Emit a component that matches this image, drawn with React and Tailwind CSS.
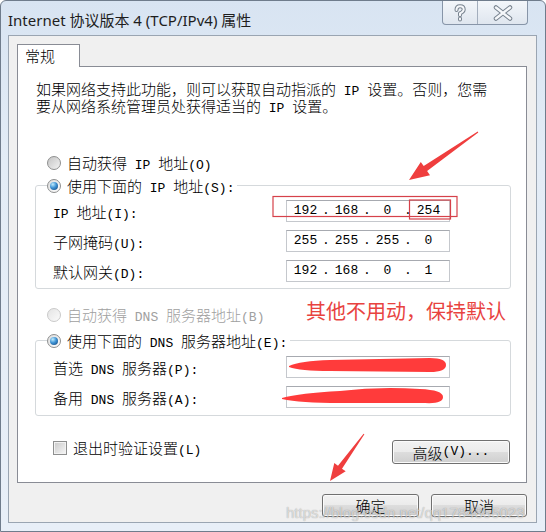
import React from "react";

// Split a label into CJK and ASCII runs so the Latin parts get a half-width mono face
function T({ s }) {
  return s
    .split(/([\x20-\x7E]+)/)
    .filter(Boolean)
    .map((part, i) =>
      /^[\x20-\x7E]+$/.test(part) ? (
        <span key={i} className="font-['Liberation_Mono',monospace] text-[13px] leading-[0]">
          {part}
        </span>
      ) : (
        <span key={i}>{part}</span>
      )
    );
}

function Radio({ checked, disabled }) {
  return (
    <span
      className={`flex h-[14px] w-[14px] shrink-0 items-center justify-center rounded-full border ${
        disabled
          ? "border-[#c9c9c9] bg-[linear-gradient(135deg,#e4e4e4,#fbfbfb)]"
          : checked
          ? "border-[#8e8f8f] bg-[linear-gradient(135deg,#dcdcdc,#ffffff)]"
          : "border-[#8e8f8f] bg-[linear-gradient(135deg,#c4c4c4,#f3f3f3)]"
      }`}
    >
      {checked && (
        <span className="h-[8px] w-[8px] rounded-full bg-[radial-gradient(circle_at_35%_30%,#c0ecfd_0%,#3d92d4_45%,#103f75_100%)]" />
      )}
    </span>
  );
}

function Btn({ children, className }) {
  return (
    <div
      className={`flex items-center justify-center rounded-[3px] border border-[#707070] bg-[linear-gradient(to_bottom,#f2f2f2_0%,#ebebeb_50%,#dddddd_50%,#cfcfcf_100%)] text-[15px] leading-[17px] shadow-[inset_0_0_0_1px_#fbfbfb] ${className}`}
    >
      {children}
    </div>
  );
}

function IpField({ parts }) {
  return (
    <div className="flex h-[22px] w-[164px] items-center border border-[#c5c8cd] border-t-[#a7aab0] bg-white pl-[2px] font-['Liberation_Mono',monospace] text-[13px] leading-[16px]">
      {parts &&
        parts.map((p, i) => (
          <React.Fragment key={i}>
            {i > 0 && <span className="w-[8px] text-center">.</span>}
            <span className="w-[33px] text-center">{p}</span>
          </React.Fragment>
        ))}
    </div>
  );
}

function Row({ label, parts }) {
  return (
    <div className="flex h-[22px] items-center">
      <div className="h-[17px] w-[233px] text-[15px] leading-[17px]">
        <T s={label} />
      </div>
      <IpField parts={parts} />
    </div>
  );
}

export default function App() {
  return (
    <div className="relative flex h-[532px] w-[546px] flex-col overflow-hidden rounded-t-[6px] border border-[#6f7c8c] bg-[linear-gradient(to_bottom,#d8e4f2,#e3ecf6_30%,#e8eff8)] font-['Noto_Sans_CJK_SC',sans-serif] font-light text-black">
      {/* Title bar */}
      <div className="flex h-[34px] shrink-0 items-start justify-between">
        <div className="pl-[7px] pt-[9px] font-['Noto_Sans','Noto_Sans_CJK_SC',sans-serif] text-[15px] font-normal leading-[20px] text-[#1e1e1e]">
          Internet 协议版本 4 (TCP/IPv4) 属性
        </div>
        <div className="mr-[17px] flex h-[24px] overflow-hidden rounded-b-[4px] border border-t-0 border-[#8795a8] bg-[linear-gradient(to_bottom,#f3f6fa,#dfe6ef)]">
          <div className="flex w-[35px] items-center justify-center border-r border-[#a3aebd]">
            <svg width="20" height="20" viewBox="0 0 20 20">
              <path
                d="M6.5 7 C6.5 4.5 8 3.2 10 3.2 C12.3 3.2 13.7 4.6 13.7 6.5 C13.7 8.4 12.3 9.3 10 10.3 L10 12.3 M10 15.6 L10 16.4"
                fill="none"
                stroke="#78838f"
                strokeWidth="4"
                strokeLinecap="round"
                strokeLinejoin="round"
              />
              <path
                d="M6.5 7 C6.5 4.5 8 3.2 10 3.2 C12.3 3.2 13.7 4.6 13.7 6.5 C13.7 8.4 12.3 9.3 10 10.3 L10 12.3 M10 15.6 L10 16.4"
                fill="none"
                stroke="#f5f7fa"
                strokeWidth="2"
                strokeLinecap="round"
                strokeLinejoin="round"
              />
            </svg>
          </div>
          <div className="flex w-[49px] items-center justify-center">
            <svg width="24" height="18" viewBox="0 0 24 18">
              <path d="M5 3.5 L19 14.5 M19 3.5 L5 14.5" fill="none" stroke="#78838f" strokeWidth="4.5" strokeLinecap="round" />
              <path d="M5 3.5 L19 14.5 M19 3.5 L5 14.5" fill="none" stroke="#f5f7fa" strokeWidth="2.5" strokeLinecap="round" />
            </svg>
          </div>
        </div>
      </div>

      {/* Client area */}
      <div className="ml-[7px] mr-[8px] flex flex-col border border-[#9aa5b2] bg-[#f0f0f0] pb-[5px] pl-[8px] pr-[9px] pt-[8px]">
        <div className="relative z-10 -mb-px h-[23px] w-[63px] border border-b-0 border-[#898c95] bg-white pl-[7px] text-[15px] leading-[21px]">
          常规
        </div>

        <div className="flex flex-col border border-[#898c95] bg-white">
          <div className="mt-[13px] pl-[18px] text-[15px] leading-[17px]">
            <div className="h-[17px]">
              <T s="如果网络支持此功能，则可以获取自动指派的 IP 设置。否则，您需" />
            </div>
            <div className="h-[17px]">
              <T s="要从网络系统管理员处获得适当的 IP 设置。" />
            </div>
          </div>

          <div className="ml-[29px] mt-[40px] flex h-[17px] items-center gap-[6px] text-[15px] leading-[17px]">
            <Radio />
            <span>
              <T s="自动获得 IP 地址(O)" />
            </span>
          </div>

          <div className="ml-[17px] mr-[15px] mt-[14px] rounded-[3px] border border-[#d5d9dc] pb-[6px]">
            <div className="-mt-[9px] ml-[11px] flex h-[17px] w-fit items-center gap-[6px] bg-white pr-[3px] text-[15px] leading-[17px]">
              <Radio checked />
              <span>
                <T s="使用下面的 IP 地址(S):" />
              </span>
            </div>
            <div className="mt-[6px] flex flex-col gap-[8px] pl-[17px]">
              <Row label="IP 地址(I):" parts={["192", "168", "0", "254"]} />
              <Row label="子网掩码(U):" parts={["255", "255", "255", "0"]} />
              <Row label="默认网关(D):" parts={["192", "168", "0", "1"]} />
            </div>
          </div>

          <div className="ml-[29px] mt-[17px] flex h-[17px] items-center gap-[6px] text-[15px] leading-[17px] text-[#a0a0a0]">
            <Radio disabled />
            <span>
              <T s="自动获得 DNS 服务器地址(B)" />
            </span>
          </div>

          <div className="ml-[17px] mr-[15px] mt-[17px] rounded-[3px] border border-[#d5d9dc] pb-[7px]">
            <div className="-mt-[9px] ml-[11px] flex h-[17px] w-fit items-center gap-[6px] bg-white pr-[3px] text-[15px] leading-[17px]">
              <Radio checked />
              <span>
                <T s="使用下面的 DNS 服务器地址(E):" />
              </span>
            </div>
            <div className="mt-[7px] flex flex-col gap-[8px] pl-[17px]">
              <Row label="首选 DNS 服务器(P):" />
              <Row label="备用 DNS 服务器(A):" />
            </div>
          </div>

          <div className="mt-[23px] flex items-start justify-between pb-[18px] pl-[35px] pr-[16px]">
            <div className="flex h-[17px] items-center gap-[6px] text-[15px] leading-[17px]">
              <span className="h-[14px] w-[14px] border border-[#8e8f8f] bg-[linear-gradient(135deg,#c9c9c9,#f7f7f7)] shadow-[inset_0_0_0_1px_#f2f2f2]" />
              <span>
                <T s="退出时验证设置(L)" />
              </span>
            </div>
            <Btn className="mt-px h-[24px] w-[118px]">
              <T s="高级(V)..." />
            </Btn>
          </div>
        </div>

        <div className="mt-[11px] flex justify-end gap-[12px]">
          <Btn className="h-[23px] w-[97px]">确定</Btn>
          <Btn className="h-[23px] w-[96px]">取消</Btn>
        </div>
      </div>

      {/* Annotations drawn over the dialog */}
      <svg className="pointer-events-none absolute left-[-1px] top-[-1px]" width="546" height="532" viewBox="0 0 546 532">
        <rect x="273" y="196.5" width="184" height="20" fill="none" stroke="#d6414a" strokeWidth="1.2" />
        <rect x="409.5" y="200" width="41" height="19" fill="none" stroke="#d6414a" strokeWidth="1.2" />
        <polygon
          points="478.3,132.4 427.1,171.1 430,175.2 409,180 420.8,162 423.7,166.1 477.7,131.6"
          fill="#ef3e3e"
        />
        <polygon
          points="364.4,434.3 342,468.7 345.7,471.3 330,481 334.3,463.1 338,465.7 363.6,433.7"
          fill="#ef3e3e"
        />
        <path
          d="M289 366 Q300 361 330 360 L430 358 Q446 358 446 365 Q446 372 430 372 L330 371 Q300 371 289 367 Z"
          fill="#ff3b3b"
        />
        <path
          d="M282 398 Q300 393 340 391 Q380 386 420 389 Q443 390 443 397 Q443 404 425 403 L340 403 Q300 403 282 399 Z"
          fill="#ff3b3b"
        />
      </svg>

      <div className="pointer-events-none absolute left-[305px] top-[299px] text-[20px] font-normal leading-[22px] text-[#e8433f]">
        其他不用动，保持默认
      </div>

      <div className="pointer-events-none absolute left-[285px] top-[503px] font-['Liberation_Sans',sans-serif] text-[15px] font-normal leading-[18px] text-white/60 [text-shadow:0_0_1px_rgba(0,0,0,0.4)]">
        https://blog.csdn.net/qq1784855023
      </div>
    </div>
  );
}
